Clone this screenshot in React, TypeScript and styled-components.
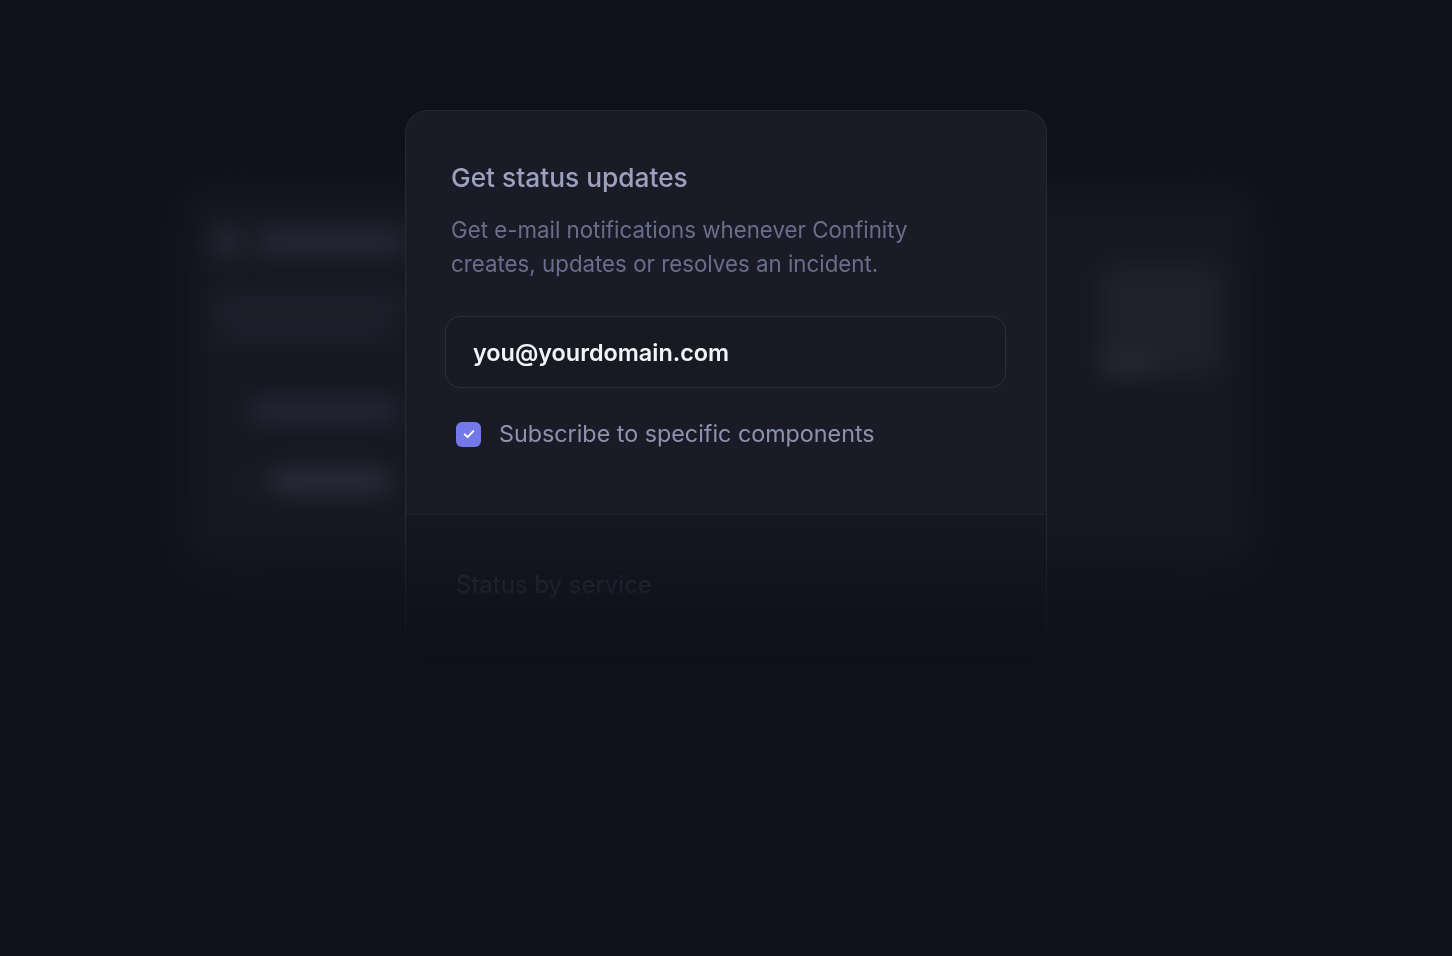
import { FunctionComponent } from "react";
import styled, { createGlobalStyle } from "styled-components";

const GlobalStyle = createGlobalStyle`
  html, body {
    margin: 0;
    padding: 0;
    background: #10111b;
    font-family: Inter, "Noto Sans", "Liberation Sans", sans-serif;
  }
  * {
    box-sizing: border-box;
  }
`;

const Stage = styled.div`
  position: relative;
  width: 100%;
  height: 956px;
  overflow: hidden;
  background: #10111b;
`;

/* blurred page sitting behind the dialog */
const Backdrop = styled.div`
  position: absolute;
  left: 190px;
  top: 195px;
  width: 1060px;
  height: 360px;
  display: grid;
  grid-template-columns: 1fr 160px;
  padding: 34px 40px 0 24px;
  background: #161722;
  box-shadow: 0 10px 60px 10px #151621;
  filter: blur(12px);
`;

const GhostColumn = styled.div<{ $pad?: number }>`
  display: flex;
  flex-direction: column;
  gap: 10px;
  padding-left: ${(p) => p.$pad ?? 0}px;
`;

const GhostRow = styled.div<{ $indent?: number; $top?: number }>`
  display: flex;
  align-items: center;
  gap: 16px;
  margin-left: ${(p) => p.$indent ?? 0}px;
  margin-top: ${(p) => p.$top ?? 0}px;
`;

const GhostBar = styled.div<{ $w: number; $h: number; $tone?: string }>`
  width: ${(p) => p.$w}px;
  height: ${(p) => p.$h}px;
  border-radius: 8px;
  background: ${(p) => p.$tone ?? "#2a2c3a"};
`;

const GhostDot = styled.div<{ $size: number; $tone?: string }>`
  width: ${(p) => p.$size}px;
  height: ${(p) => p.$size}px;
  border-radius: 50%;
  background: ${(p) => p.$tone ?? "#2a2c3a"};
`;

const Dialog = styled.section`
  position: relative;
  width: 642px;
  margin: 110px auto 0;
  border: 1px solid rgba(255, 255, 255, 0.06);
  border-radius: 22px;
  background: #1a1b26;
  box-shadow: 0 30px 60px rgba(5, 6, 12, 0.55);
  overflow: hidden;
  -webkit-mask-image: linear-gradient(to bottom, #000 72%, transparent 100%);
  mask-image: linear-gradient(to bottom, #000 72%, transparent 100%);
`;

const Body = styled.div`
  display: flex;
  flex-direction: column;
  padding: 51px 40px 63px 39px;
`;

const Title = styled.h2`
  margin: 0 0 0 6px;
  font-size: 26.3px;
  line-height: 32px;
  font-weight: 500;
  color: #9ca1be;
`;

const Lead = styled.p`
  margin: 19px 0 0 6px;
  max-width: 490px;
  font-size: 22.3px;
  line-height: 34px;
  font-weight: 400;
  color: #696e8b;
`;

const EmailField = styled.div`
  display: flex;
  align-items: center;
  height: 72px;
  margin-top: 35px;
  padding: 0 27px;
  border: 1.5px solid #2d2f3f;
  border-radius: 15px;
  background: #181923;
  font-size: 23.4px;
  font-weight: 600;
  color: #f3f4f8;
`;

const CheckRow = styled.label`
  display: flex;
  align-items: center;
  gap: 18px;
  margin: 29px 0 0 11px;
  font-size: 23.3px;
  line-height: 34px;
  color: #8d92ae;
`;

const CheckBox = styled.span`
  display: inline-flex;
  align-items: center;
  justify-content: center;
  width: 25px;
  height: 25px;
  border-radius: 6px;
  background: #7479ea;
`;

const Footer = styled.div`
  height: 150px;
  padding: 53px 0 0 50px;
  border-top: 1.5px solid #232533;
  background: linear-gradient(to bottom, #161722, #12131c);
`;

const FooterHeading = styled.h3`
  margin: 0;
  font-size: 24px;
  line-height: 34px;
  font-weight: 400;
  color: #2e3040;
`;

const CheckIcon: FunctionComponent = () => (
  <svg width="14" height="14" viewBox="0 0 24 24" fill="none">
    <path
      d="M4.5 12.5l5 5L19.5 7"
      stroke="#ffffff"
      strokeWidth="3.2"
      strokeLinecap="round"
      strokeLinejoin="round"
    />
  </svg>
);

const BlurredPage: FunctionComponent = () => (
  <Backdrop aria-hidden>
    <GhostColumn>
      <GhostRow>
        <GhostDot $size={26} $tone="#2c2e3c" />
        <GhostBar $w={150} $h={20} $tone="#2a2c3a" />
      </GhostRow>
      <GhostBar $w={190} $h={12} $tone="#252735" style={{ marginTop: 34 }} />
      <GhostBar $w={180} $h={12} $tone="#232533" style={{ marginTop: 4 }} />
      <GhostRow $indent={35} $top={54}>
        <GhostBar $w={150} $h={20} $tone="#282a39" />
      </GhostRow>
      <GhostRow $indent={28} $top={40}>
        <GhostDot $size={12} $tone="#222431" />
        <GhostBar $w={120} $h={20} $tone="#2f313f" />
      </GhostRow>
    </GhostColumn>
    <GhostColumn $pad={50}>
      <GhostBar $w={120} $h={110} $tone="#1e202c" style={{ marginTop: 36 }} />
      <GhostBar $w={56} $h={18} $tone="#292b37" style={{ marginTop: -30 }} />
    </GhostColumn>
  </Backdrop>
);

export default function App() {
  return (
    <Stage>
      <GlobalStyle />
      <BlurredPage />
      <Dialog>
        <Body>
          <Title>Get status updates</Title>
          <Lead>
            Get e-mail notifications whenever Confinity creates, updates or
            resolves an incident.
          </Lead>
          <EmailField>you@yourdomain.com</EmailField>
          <CheckRow>
            <CheckBox>
              <CheckIcon />
            </CheckBox>
            Subscribe to specific components
          </CheckRow>
        </Body>
        <Footer>
          <FooterHeading>Status by service</FooterHeading>
        </Footer>
      </Dialog>
    </Stage>
  );
}
